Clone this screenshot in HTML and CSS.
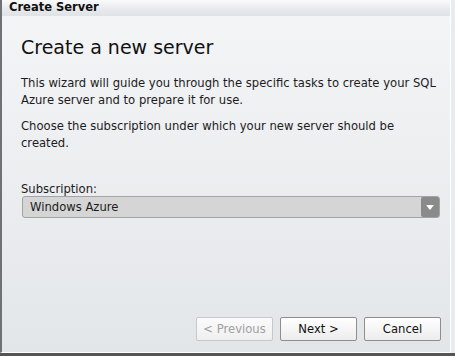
FILE: index.html
```html
<!DOCTYPE html>
<html lang="en">
<head>
    <meta charset="UTF-8">
    <title>Create Server</title>
    <link rel="stylesheet" href="styles.css">
</head>
<body>
    <div class="window">
        <div class="titlebar">Create Server</div>
        <div class="content">
            <h1>Create a new server</h1>
            <p>This wizard will guide you through the specific tasks to create your SQL Azure server and to prepare it for use.</p>
            <p>Choose the subscription under which your new server should be created.</p>
            <label class="field-label">Subscription:</label>
            <div class="select">
                <span>Windows Azure</span>
                <div class="select-arrow">
                    <svg width="8" height="5" viewBox="0 0 8 5"><path d="M0 0 L8 0 L4 5 Z" fill="#fff"/></svg>
                </div>
            </div>
        </div>
        <div class="footer">
            <button class="btn" disabled>&lt; Previous</button>
            <button class="btn">Next &gt;</button>
            <button class="btn">Cancel</button>
        </div>
    </div>
</body>
</html>
```

FILE: styles.css
```css
html, body {
    margin: 0;
    padding: 0;
}
body {
    font-family: "DejaVu Sans", Verdana, sans-serif;
    background: #555;
    width: 455px;
    height: 356px;
    overflow: hidden;
}
.window {
    display: flex;
    flex-direction: column;
    height: 352px;
    border-left: 2px solid #6e7175;
    border-right: 1px solid #fff;
    border-bottom: 1px solid #fff;
    margin-right: 4px;
    background: linear-gradient(#f4f5f7, #e3e6e9);
    box-shadow: 4px 0 0 #e9ecef;
}
.titlebar {
    height: 16px;
    line-height: 15px;
    padding-left: 7px;
    font-size: 11.5px;
    font-weight: bold;
    color: #111;
    background: linear-gradient(#fafafb, #e8eaed 55%, #dfe2e6);
}
.content {
    flex: 1;
    padding: 20px 10px 0 19px;
    color: #1c1c1c;
}
h1 {
    margin: 0 0 17px 0;
    font-size: 19px;
    font-weight: normal;
    color: #111;
}
p {
    margin: 0 0 9px 0;
    font-size: 11.6px;
    line-height: 17px;
}
.field-label {
    display: block;
    margin-top: 30px;
    font-size: 11.6px;
    line-height: 14px;
}
.select {
    display: flex;
    align-items: center;
    justify-content: space-between;
    height: 20px;
    margin-left: 1px;
    padding-left: 7px;
    font-size: 11.6px;
    background: #d5d5d5;
    border: 1px solid #a3a3a3;
    border-radius: 3px;
}
.select-arrow {
    display: flex;
    align-items: center;
    justify-content: center;
    width: 18px;
    height: 20px;
    background: #8a8a8a;
    border-radius: 2px;
}
.footer {
    display: flex;
    justify-content: flex-end;
    gap: 7px;
    padding: 0 9px 11px 0;
}
.btn {
    width: 77px;
    height: 24px;
    font-family: "DejaVu Sans", Verdana, sans-serif;
    font-size: 11.6px;
    color: #111;
    background: linear-gradient(#ffffff, #ececec);
    border: 1px solid #8e8e8e;
    border-radius: 2px;
    padding: 0;
}
.btn:disabled {
    color: #a0a0a0;
    border-color: #c8c8c8;
    background: linear-gradient(#fbfbfb, #eeeff0);
}
```
